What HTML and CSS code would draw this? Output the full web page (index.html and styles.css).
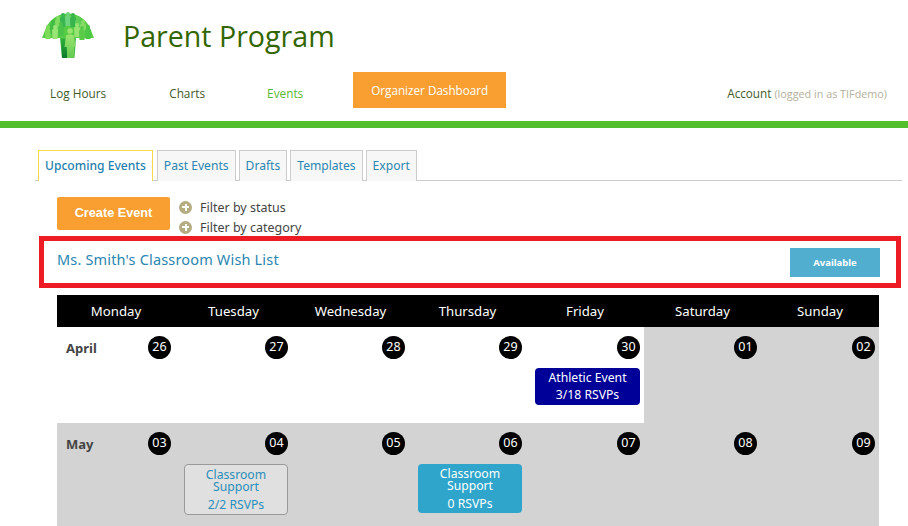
FILE: index.html
```html
<!DOCTYPE html>
<html lang="en">
<head>
<meta charset="utf-8">
<title>Parent Program</title>
<link rel="stylesheet" href="styles.css">
</head>
<body>
<header class="masthead">
  <div class="brand">
    <svg class="logo" width="52" height="48" viewBox="0 0 52 48" aria-hidden="true">
      <defs>
        <linearGradient id="front" x1="0" y1="0" x2="0" y2="1">
          <stop offset="0" stop-color="#9be36f"/><stop offset="1" stop-color="#63cb50"/>
        </linearGradient>
        <linearGradient id="back" x1="0" y1="0" x2="0" y2="1">
          <stop offset="0" stop-color="#2fae3c"/><stop offset="1" stop-color="#0a7a28"/>
        </linearGradient>
        <filter id="soft" x="-10%" y="-10%" width="120%" height="120%"><feGaussianBlur stdDeviation="0.5"/></filter>
        <path id="fig" d="M2 0 a2 2 0 0 1 2 2 a2 2 0 0 1 -.6 1.400 L5 5 L4.500 14 H-.5 L-1 5 L.6 3.400 A2 2 0 0 1 0 2 a2 2 0 0 1 2 -2 Z"/>
      </defs>
      <g filter="url(#soft)">
        <path d="M0 27 L4 17 A24 24 0 0 1 48 17 L52 27 Z" fill="#56cc44"/>
        <use href="#fig" x="4" y="14" fill="#7bdb58"/>
        <use href="#fig" x="9" y="9" fill="#3fbd42"/>
        <use href="#fig" x="14" y="5" fill="#82dc62"/>
        <use href="#fig" x="19" y="2" fill="#38b552"/>
        <use href="#fig" x="24" y="1" fill="#6ed47c"/>
        <use href="#fig" x="29" y="2" fill="#37b44e"/>
        <use href="#fig" x="34" y="5" fill="#5fcf5c"/>
        <use href="#fig" x="39" y="9" fill="#86dc66"/>
        <use href="#fig" x="44" y="14" fill="#4cc644"/>
        <use href="#fig" x="11" y="14" fill="#9ae474"/>
        <use href="#fig" x="17" y="11" fill="#4cc24a"/>
        <use href="#fig" x="33" y="12" fill="#98e272"/>
        <use href="#fig" x="38" y="15" fill="#5acb4a"/>
        <path d="M18 27 H34 L32.500 47 H20 Z" fill="#45bb48"/>
        <path d="M19 28 H24 V33 L26 47 H20 Z" fill="url(#back)"/>
        <circle cx="28" cy="20" r="2.800" fill="#9be36f"/>
        <path d="M24 25 C24.500 23 31.500 23 32 25 L33.500 36 H32 V47 H25 V36 H22.500 Z" fill="url(#front)"/>
      </g>
    </svg>
    <h1 class="title">Parent Program</h1>
  </div>
  <nav class="nav">
    <a class="nav-link nav-log">Log Hours</a>
    <a class="nav-link nav-charts">Charts</a>
    <a class="nav-link nav-events">Events</a>
    <a class="nav-cta">Organizer Dashboard</a>
    <span class="account">Account <span class="account-note">(logged in as TIFdemo)</span></span>
  </nav>
</header>
<div class="rule"></div>
<main class="content">
  <div class="tabs">
    <a class="tab tab-active">Upcoming Events</a>
    <a class="tab">Past Events</a>
    <a class="tab">Drafts</a>
    <a class="tab">Templates</a>
    <a class="tab">Export</a>
  </div>
  <div class="toolbar">
    <a class="create">Create Event</a>
    <div class="filters">
      <div class="filter"><span class="plus"></span>Filter by status</div>
      <div class="filter"><span class="plus"></span>Filter by category</div>
    </div>
  </div>
  <section class="wish">
    <a class="wish-name">Ms. Smith's Classroom Wish List</a>
    <a class="wish-status">Available</a>
  </section>
  <section class="calendar">
    <div class="weekdays">
      <div>Monday</div><div>Tuesday</div><div>Wednesday</div><div>Thursday</div><div>Friday</div><div>Saturday</div><div>Sunday</div>
    </div>
    <div class="week">
      <div class="day"><div class="day-top"><span class="month">April</span><span class="num">26</span></div></div>
      <div class="day"><div class="day-top"><span class="num">27</span></div></div>
      <div class="day"><div class="day-top"><span class="num">28</span></div></div>
      <div class="day"><div class="day-top"><span class="num">29</span></div></div>
      <div class="day"><div class="day-top"><span class="num">30</span></div>
        <a class="event event-navy"><span class="event-name">Athletic Event</span><span class="event-rsvp">3/18 RSVPs</span></a></div>
      <div class="day off"><div class="day-top"><span class="num">01</span></div></div>
      <div class="day off"><div class="day-top"><span class="num">02</span></div></div>
    </div>
    <div class="week week-last">
      <div class="day off"><div class="day-top"><span class="month">May</span><span class="num">03</span></div></div>
      <div class="day off"><div class="day-top"><span class="num">04</span></div>
        <a class="event event-full"><span class="event-name tight">Classroom Support</span><span class="event-rsvp">2/2 RSVPs</span></a></div>
      <div class="day off"><div class="day-top"><span class="num">05</span></div></div>
      <div class="day off"><div class="day-top"><span class="num">06</span></div>
        <a class="event event-open"><span class="event-name tight">Classroom Support</span><span class="event-rsvp">0 RSVPs</span></a></div>
      <div class="day off"><div class="day-top"><span class="num">07</span></div></div>
      <div class="day off"><div class="day-top"><span class="num">08</span></div></div>
      <div class="day off"><div class="day-top"><span class="num">09</span></div></div>
    </div>
  </section>
</main>
</body>
</html>
```
FILE: styles.css
```css
* { box-sizing: border-box; }
html, body { margin: 0; padding: 0; height: 526px; overflow: hidden; background: #fff; }
body { font-family: "Noto Sans", "Liberation Sans", sans-serif; color: #333; }

.masthead { height: 121px; padding-top: 11px; }
.brand { display: flex; align-items: flex-start; height: 61px; padding-left: 42px; }
.logo { flex: none; }
.title { margin: 5px 0 0 29px; font: 400 28.600px/40px "Open Sans", sans-serif; color: #336600; }

.nav { display: flex; align-items: center; height: 36px; font: 11.800px/16px "Open Sans", sans-serif; }
.nav-link { color: #3f5a2a; margin-top: 6px; }
.nav-log { margin-left: 50px; }
.nav-charts { margin-left: 63px; }
.nav-events { margin-left: 62px; color: #58b82e; }
.nav-cta { margin-left: 50px; width: 153px; height: 36px; background: #f99f32; color: #fff; text-align: center; line-height: 37px; font-size: 11.700px; }
.account { margin-left: auto; margin-right: 21px; margin-top: 6px; color: #3f5a2a; font-size: 11.700px; }
.account-note { color: #b5b09c; font-size: 10.800px; }

.rule { height: 7px; background: #54bf2c; }

.content { padding: 22px 6px 0 35px; }

.tabs { display: flex; gap: 3px; height: 31px; padding-left: 3px; border-bottom: 1px solid #ccc; font-size: 12.100px; }
.tab { height: 31px; padding: 0 6px; line-height: 30px; color: #2a86b0; background: #f7f7f7; border: 1px solid #ccc; border-bottom: 0; }
.tab-active { background: #fff; border-color: #f7d94c; color: #1f7fae; margin-right: 1px; font-weight: 500; }

.toolbar { display: flex; height: 55px; padding: 16px 0 0 22px; }
.create { width: 113px; height: 33px; border-radius: 2px; background: #f99f32; color: #fff; font: 700 12.700px/32px "Liberation Sans", sans-serif; text-align: center; }
.filters { margin-left: 9px; }
.filter { display: flex; align-items: center; height: 20px; font-size: 12.500px; color: #444; }
.plus { position: relative; width: 13px; height: 13px; margin-right: 8px; border-radius: 50%; background: #b5ac82; }
.plus::before { content: ""; position: absolute; left: 3px; top: 5.500px; width: 7px; height: 2px; background: #fff; }
.plus::after { content: ""; position: absolute; left: 5.500px; top: 3px; width: 2px; height: 7px; background: #fff; }

.wish { display: flex; align-items: center; justify-content: space-between; width: 862px; height: 52px; margin-left: 4px; padding: 0 16px 2px 13px; border: 5px solid #ed1c24; }
.wish-name { font-size: 14.500px; letter-spacing: .17px; color: #2a86b0; margin-top: -4px; }
.wish-status { width: 90px; height: 29px; margin-top: 3px; background: #52aecf; color: #fff; font: 700 9.500px/29px "Noto Sans", sans-serif; text-align: center; }

.calendar { width: 822px; margin: 7px 0 0 22px; }
.weekdays, .week { display: grid; grid-template-columns: 118px 117px 117px 117px 118px 117px 118px; }
.weekdays { height: 32px; background: #000; color: #fff; font-size: 13.200px; line-height: 32px; text-align: center; }
.week { height: 96px; }
.week-last { height: 103px; }
.day { padding: 9px 4px 0 0; background: #fff; }
.off { background: #d3d3d3; }
.day-top { display: flex; align-items: center; justify-content: flex-end; height: 23px; }
.month { margin-right: auto; padding-left: 9px; font-size: 13px; font-weight: 700; color: #444; }
.num { width: 23px; height: 23px; border-radius: 50%; background: #000; color: #fff; font-size: 12.500px; line-height: 22px; text-align: center; }

.event { display: block; width: 105px; margin: 9px 0 0 auto; border-radius: 4px; font-size: 12.200px; text-align: center; }
.event-name, .event-rsvp { display: block; }
.event-name { line-height: 17px; padding-top: 1px; }
.event-rsvp { line-height: 18px; }
.event-name.tight { line-height: 12px; padding-top: 3px; padding-bottom: 3px; }
.event-navy { height: 37px; background: #000099; color: #fff; }
.event-full { width: 104px; height: 51px; padding-top: 1px; background: #e0e0e0; border: 1px solid #999; color: #2a8fba; }
.event-open { width: 104px; height: 49px; padding-top: 1px; background: #2fa5cb; color: #fff; }
```
